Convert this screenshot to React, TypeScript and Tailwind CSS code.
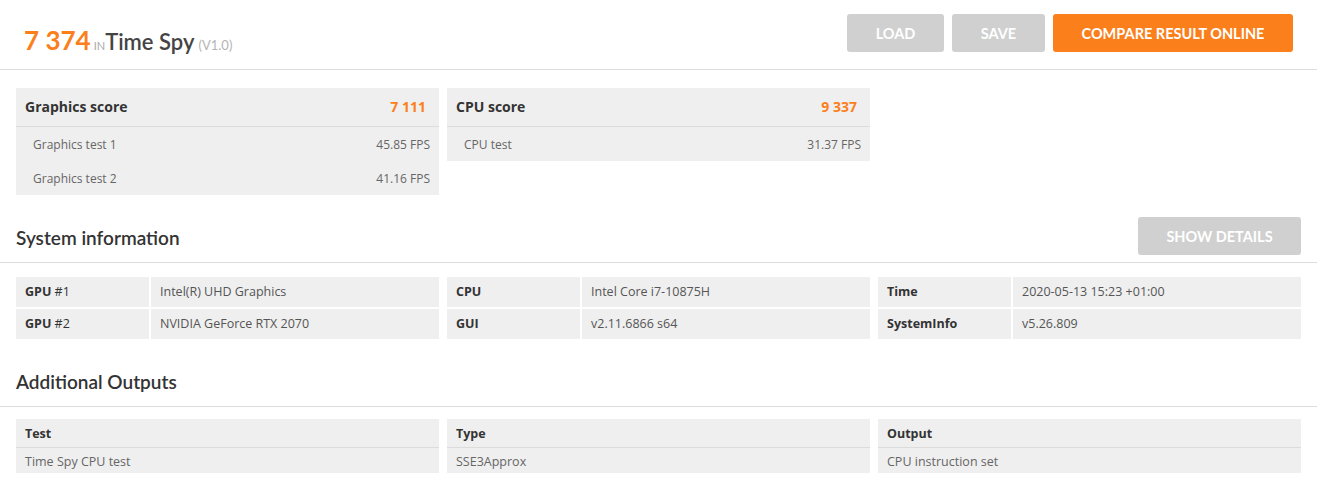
const lato = { fontFamily: 'Lato, "Open Sans", sans-serif' }

function Btn({ label, w, orange }: { label: string; w: string; orange?: boolean }) {
  return (
    <button
      className={`h-[38px] ${w} rounded-[3px] pt-px text-[14.5px] font-bold uppercase text-white ${
        orange ? 'bg-[#fb7f1b]' : 'bg-[#d0d0d0]'
      }`}
      style={lato}
    >
      {label}
    </button>
  )
}

function ScoreBox({
  title,
  score,
  rows,
}: {
  title: string
  score: string
  rows: [string, string][]
}) {
  return (
    <div className="w-[423px] bg-[#efefef]">
      <div className="flex h-[39px] items-center justify-between border-b border-[#dcdcdc] pb-px pl-[9px] pr-[13px]">
        <span className="text-[14px] font-bold text-[#333]">{title}</span>
        <span className="text-[14px] font-bold text-[#fb7f1b]">{score}</span>
      </div>
      {rows.map(([name, val]) => (
        <div key={name} className="flex h-[34px] items-center justify-between pl-[17px] pr-[9px] pt-px text-[12px] text-[#666]">
          <span>{name}</span>
          <span>{val}</span>
        </div>
      ))}
    </div>
  )
}

function SectionHead({ title, children }: { title: string; children?: React.ReactNode }) {
  return (
    <div className="flex h-[68px] items-start justify-between border-b border-[#ddd] px-4 pt-[22px]">
      <h2 className="h-[38px] pt-[4px] text-[19px] font-semibold leading-[34px] text-[#333]" style={lato}>
        {title}
      </h2>
      {children}
    </div>
  )
}

function InfoTable({ rows }: { rows: [string, string, string][] }) {
  return (
    <div className="flex w-[423px] flex-col gap-[2px]">
      {rows.map(([b, rest, val]) => (
        <div key={b + rest} className="flex h-[30px] gap-[2px] text-[12.5px]">
          <div className="flex w-[133px] items-center bg-[#efefef] pl-[9px] pt-px text-[#333]">
            <span className="font-bold">{b}</span>
            {rest && <span>&nbsp;{rest}</span>}
          </div>
          <div className="flex flex-1 items-center bg-[#efefef] pl-[9px] pt-px text-[#555]">{val}</div>
        </div>
      ))}
    </div>
  )
}

function OutputCol({ head, val }: { head: string; val: string }) {
  return (
    <div className="w-[423px] bg-[#efefef] text-[12.5px]">
      <div className="flex h-[29px] items-center border-b border-[#dcdcdc] pl-[9px] pt-[3px] font-bold text-[#333]">{head}</div>
      <div className="flex h-[25px] items-center pl-[9px] pt-[3px] text-[#666]">{val}</div>
    </div>
  )
}

export default function App() {
  return (
    <div className="min-h-[488px] bg-white" style={{ fontFamily: '"Open Sans", sans-serif' }}>
      <header className="flex h-[70px] items-start justify-between border-b border-[#ddd] px-6 pt-[14px]">
        <div className="flex items-baseline pt-[7px]" style={lato}>
          <span className="text-[26px] font-bold text-[#fb7f1b]">7 374</span>
          <span className="ml-[3px] text-[11px] uppercase text-[#aaa]">in</span>
          <span className="text-[22px] font-semibold text-[#444]">Time Spy</span>
          <span className="ml-[4px] text-[13px] text-[#b4b4b4]">(V1.0)</span>
        </div>
        <div className="flex gap-2">
          <Btn label="Load" w="w-[97px]" />
          <Btn label="Save" w="w-[93px]" />
          <Btn label="Compare result online" w="w-[240px]" orange />
        </div>
      </header>

      <div className="flex items-start gap-2 px-4 pt-[18px]">
        <ScoreBox
          title="Graphics score"
          score="7 111"
          rows={[
            ['Graphics test 1', '45.85 FPS'],
            ['Graphics test 2', '41.16 FPS'],
          ]}
        />
        <ScoreBox title="CPU score" score="9 337" rows={[['CPU test', '31.37 FPS']]} />
      </div>

      <SectionHead title="System information">
        <Btn label="Show details" w="w-[163px]" />
      </SectionHead>
      <div className="flex gap-2 px-4 pt-[14px]">
        <InfoTable
          rows={[
            ['GPU', '#1', 'Intel(R) UHD Graphics'],
            ['GPU', '#2', 'NVIDIA GeForce RTX 2070'],
          ]}
        />
        <InfoTable
          rows={[
            ['CPU', '', 'Intel Core i7-10875H'],
            ['GUI', '', 'v2.11.6866 s64'],
          ]}
        />
        <InfoTable
          rows={[
            ['Time', '', '2020-05-13 15:23 +01:00'],
            ['SystemInfo', '', 'v5.26.809'],
          ]}
        />
      </div>

      <SectionHead title="Additional Outputs" />
      <div className="flex gap-2 px-4 pt-[12px]">
        <OutputCol head="Test" val="Time Spy CPU test" />
        <OutputCol head="Type" val="SSE3Approx" />
        <OutputCol head="Output" val="CPU instruction set" />
      </div>
    </div>
  )
}
